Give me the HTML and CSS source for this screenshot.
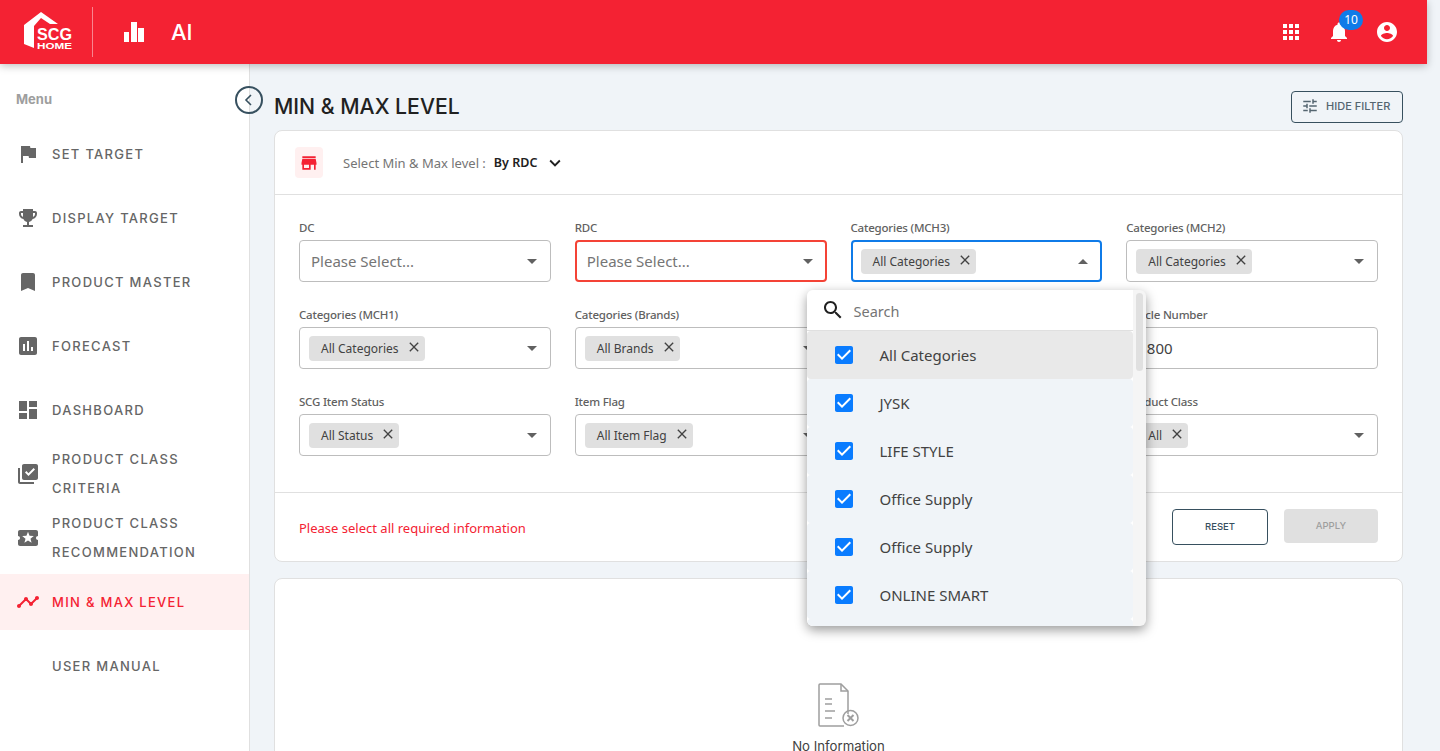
FILE: index.html
```html
<!DOCTYPE html>
<html>
<head>
	<meta charset="utf-8">
	<meta name="viewport" content="width=device-width, initial-scale=1">
	<title>Min &amp; Max Level</title>
	<link rel="stylesheet" href="styles.css">
</head>
<body>
	<svg class="defs" width="0" height="0">
		<symbol id="caret" viewBox="0 0 24 24"><path d="M7 10l5 5 5-5z"/></symbol>
		<symbol id="caret-up" viewBox="0 0 24 24"><path d="M7 15l5-5 5 5z"/></symbol>
		<symbol id="close" viewBox="0 0 24 24"><path d="M19 6.41L17.59 5 12 10.59 6.41 5 5 6.41 10.59 12 5 17.59 6.41 19 12 13.41 17.59 19 19 17.59 13.41 12z"/></symbol>
		<symbol id="checked" viewBox="0 0 24 24"><rect x="5" y="5" width="14" height="14" fill="#fff"/><path d="M19 3H5c-1.11 0-2 .9-2 2v14c0 1.1.89 2 2 2h14c1.11 0 2-.9 2-2V5c0-1.1-.89-2-2-2zm-9 14l-5-5 1.41-1.41L10 14.17l7.59-7.59L19 8l-9 9z"/></symbol>
	</svg>

	<div class="app">
		<header class="topbar">
			<svg class="logo" viewBox="20 7 60 50" width="60" height="50">
				<path d="M24 25L41 12l17 12h-8l-9-6-7 8v22l-10-4z" fill="#fff"/>
				<text class="logo-scg" x="37" y="39.5" textLength="35" lengthAdjust="spacingAndGlyphs">SCG</text>
				<text class="logo-home" x="37" y="48.5" textLength="35" lengthAdjust="spacingAndGlyphs">HOME</text>
			</svg>
			<span class="topbar-sep"></span>
			<svg class="topbar-chart" viewBox="0 0 20 20" width="20" height="20"><path d="M0 10h5v10H0zM7 0h6v20H7zM14 6h6v14h-6z" fill="#fff"/></svg>
			<span class="topbar-title">AI</span>
			<div class="topbar-icons">
				<svg class="ticon" viewBox="0 0 24 24"><path d="M4 8h4V4H4v4zm6 12h4v-4h-4v4zm-6 0h4v-4H4v4zm0-6h4v-4H4v4zm6 0h4v-4h-4v4zm6-10v4h4V4h-4zm-6 4h4V4h-4v4zm6 6h4v-4h-4v4zm0 6h4v-4h-4v4z"/></svg>
				<div class="bell">
					<svg class="ticon" viewBox="0 0 24 24"><path d="M12 22c1.1 0 2-.9 2-2h-4c0 1.1.89 2 2 2zm6-6v-5c0-3.07-1.64-5.64-4.5-6.32V4c0-.83-.67-1.5-1.5-1.5s-1.5.67-1.5 1.5v.68C7.63 5.36 6 7.92 6 11v5l-2 2v1h16v-1l-2-2z"/></svg>
					<span class="badge">10</span>
				</div>
				<svg class="ticon" viewBox="0 0 24 24"><path d="M12 2C6.48 2 2 6.48 2 12s4.48 10 10 10 10-4.48 10-10S17.52 2 12 2zm0 3c1.66 0 3 1.34 3 3s-1.34 3-3 3-3-1.34-3-3 1.34-3 3-3zm0 14.2c-2.5 0-4.71-1.28-6-3.22.03-1.99 4-3.08 6-3.08 1.99 0 5.97 1.09 6 3.08-1.29 1.94-3.5 3.22-6 3.22z"/></svg>
			</div>
		</header>

		<div class="layout">
			<aside class="sidebar">
				<div class="menu-title">Menu</div>
				<nav class="menu">
					<a class="menu-item"><svg viewBox="0 0 24 24"><path d="M14.4 6L14 4H5v17h2v-7h5.6l.4 2h7V6z"/></svg><span>SET TARGET</span></a>
					<a class="menu-item"><svg viewBox="0 0 24 24"><path d="M19 5h-2V3H7v2H5c-1.1 0-2 .9-2 2v1c0 2.55 1.92 4.63 4.39 4.94.63 1.5 1.98 2.63 3.61 2.96V19H7v2h10v-2h-4v-3.1c1.63-.33 2.98-1.46 3.61-2.96C19.08 12.63 21 10.55 21 8V7c0-1.1-.9-2-2-2zM5 8V7h2v3.82C5.84 10.4 5 9.3 5 8zm14 0c0 1.3-.84 2.4-2 2.82V7h2v1z"/></svg><span>DISPLAY TARGET</span></a>
					<a class="menu-item"><svg viewBox="0 0 24 24"><path d="M17 3H7c-1.1 0-1.99.9-1.99 2L5 21l7-3 7 3V5c0-1.1-.9-2-2-2z"/></svg><span>PRODUCT MASTER</span></a>
					<a class="menu-item"><svg viewBox="0 0 24 24"><path d="M19 3H5c-1.1 0-2 .9-2 2v14c0 1.1.9 2 2 2h14c1.1 0 2-.9 2-2V5c0-1.1-.9-2-2-2zM9 17H7v-7h2v7zm4 0h-2V7h2v10zm4 0h-2v-4h2v4z"/></svg><span>FORECAST</span></a>
					<a class="menu-item"><svg viewBox="0 0 24 24"><path d="M3 13h8V3H3v10zm0 8h8v-6H3v6zm10 0h8V11h-8v10zm0-18v6h8V3h-8z"/></svg><span>DASHBOARD</span></a>
					<a class="menu-item"><svg viewBox="0 0 24 24"><path d="M20 2H8c-1.1 0-2 .9-2 2v12c0 1.1.9 2 2 2h12c1.1 0 2-.9 2-2V4c0-1.1-.9-2-2-2zm-7.53 12L9 10.5l1.4-1.41 2.07 2.07L17.6 6 19 7.41 12.47 14zM4 6H2v14c0 1.1.9 2 2 2h14v-2H4V6z"/></svg><span>PRODUCT CLASS CRITERIA</span></a>
					<a class="menu-item"><svg viewBox="0 0 24 24"><path d="M20 12c0-1.1.9-2 2-2V6c0-1.1-.9-2-2-2H4c-1.1 0-1.99.9-1.99 2v4c1.1 0 1.99.9 1.99 2s-.89 2-2 2v4c0 1.1.9 2 2 2h16c1.1 0 2-.9 2-2v-4c-1.1 0-2-.9-2-2zm-4.42 4.8L12 14.5l-3.58 2.3 1.08-4.12-3.29-2.69 4.24-.25L12 5.8l1.54 3.95 4.24.25-3.29 2.69 1.09 4.11z"/></svg><span>PRODUCT CLASS RECOMMENDATION</span></a>
					<a class="menu-item active"><svg viewBox="0 0 24 24"><path d="M23 8c0 1.1-.9 2-2 2-.18 0-.35-.02-.51-.07l-3.56 3.55c.05.16.07.34.07.52 0 1.1-.9 2-2 2s-2-.9-2-2c0-.18.02-.36.07-.52l-2.55-2.55c-.16.05-.34.07-.52.07s-.36-.02-.52-.07l-4.55 4.56c.05.16.07.33.07.51 0 1.1-.9 2-2 2s-2-.9-2-2 .9-2 2-2c.18 0 .35.02.51.07l4.56-4.55C8.02 9.36 8 9.18 8 9c0-1.1.9-2 2-2s2 .9 2 2c0 .18-.02.36-.07.52l2.55 2.55c.16-.05.34-.07.52-.07s.36.02.52.07l3.55-3.56C19.02 8.35 19 8.18 19 8c0-1.1.9-2 2-2s2 .9 2 2z"/></svg><span>MIN &amp; MAX LEVEL</span></a>
					<a class="menu-item"><svg viewBox="0 0 24 24"></svg><span>USER MANUAL</span></a>
				</nav>
				<button class="collapse" type="button">
					<svg viewBox="0 0 24 24" width="24" height="24"><path d="M14 7l-5 5 5 5" fill="none" stroke="#37505f" stroke-width="1.6"/></svg>
				</button>
			</aside>

			<main class="main">
				<div class="page-head">
					<h1>MIN &amp; MAX LEVEL</h1>
					<button class="btn-filter" type="button">
						<svg viewBox="0 0 24 24" width="18" height="18"><path d="M3 17v2h6v-2H3zM3 5v2h10V5H3zm10 16v-2h8v-2h-8v-2h-2v6h2zM7 9v2H3v2h4v2h2V9H7zm14 4v-2H11v2h10zm-6-4h2V7h4V5h-4V3h-2v6z"/></svg>
						HIDE FILTER
					</button>
				</div>

				<section class="card">
					<div class="card-head">
						<span class="store-icon">
							<svg viewBox="0 0 24 24" width="20" height="20"><path d="M20 4H4v2h16V4zm1 10v-2l-1-5H4l-1 5v2h1v6h10v-6h4v6h2v-6h1zm-9 4H6v-4h6v4z"/></svg>
						</span>
						<span class="level-label">Select Min &amp; Max level :</span>
						<span class="level-value">By RDC</span>
						<svg class="level-chevron" viewBox="0 0 24 24" width="22" height="22"><path d="M16.59 8.59L12 13.17 7.41 8.59 6 10l6 6 6-6z"/></svg>
					</div>

					<div class="filters">
						<div class="field">
							<label>DC</label>
							<div class="control"><span class="placeholder">Please Select...</span><svg class="caret"><use href="#caret"/></svg></div>
						</div>
						<div class="field">
							<label>RDC</label>
							<div class="control error"><span class="placeholder">Please Select...</span><svg class="caret"><use href="#caret"/></svg></div>
						</div>
						<div class="field">
							<label>Categories (MCH3)</label>
							<div class="control focus">
								<span class="chip">All Categories<svg><use href="#close"/></svg></span>
								<svg class="caret"><use href="#caret-up"/></svg>
								<div class="dropdown">
									<div class="dropdown-main">
										<div class="search">
											<svg viewBox="0 0 24 24" width="24" height="24"><path d="M15.5 14h-.79l-.28-.27C15.41 12.59 16 11.11 16 9.5 16 5.91 13.09 3 9.5 3S3 5.91 3 9.5 5.91 16 9.5 16c1.61 0 3.09-.59 4.23-1.57l.27.28v.79l5 4.99L20.49 19l-4.99-5zm-6 0C7.01 14 5 11.99 5 9.5S7.01 5 9.5 5 14 7.01 14 9.5 11.99 14 9.5 14z"/></svg>
											<span>Search</span>
										</div>
										<div class="option current"><svg><use href="#checked"/></svg>All Categories</div>
										<div class="option"><svg><use href="#checked"/></svg>JYSK</div>
										<div class="option"><svg><use href="#checked"/></svg>LIFE STYLE</div>
										<div class="option"><svg><use href="#checked"/></svg>Office Supply</div>
										<div class="option"><svg><use href="#checked"/></svg>Office Supply</div>
										<div class="option"><svg><use href="#checked"/></svg>ONLINE SMART</div>
										<div class="option"></div>
									</div>
									<div class="scroll-track"><div class="scroll-thumb"></div></div>
								</div>
							</div>
						</div>
						<div class="field">
							<label>Categories (MCH2)</label>
							<div class="control"><span class="chip">All Categories<svg><use href="#close"/></svg></span><svg class="caret"><use href="#caret"/></svg></div>
						</div>

						<div class="field">
							<label>Categories (MCH1)</label>
							<div class="control"><span class="chip">All Categories<svg><use href="#close"/></svg></span><svg class="caret"><use href="#caret"/></svg></div>
						</div>
						<div class="field">
							<label>Categories (Brands)</label>
							<div class="control"><span class="chip">All Brands<svg><use href="#close"/></svg></span><svg class="caret"><use href="#caret"/></svg></div>
						</div>
						<div class="field">
							<label></label>
							<div class="control"></div>
						</div>
						<div class="field">
							<label>Article Number</label>
							<div class="control"><span class="value">1800</span></div>
						</div>

						<div class="field">
							<label>SCG Item Status</label>
							<div class="control"><span class="chip">All Status<svg><use href="#close"/></svg></span><svg class="caret"><use href="#caret"/></svg></div>
						</div>
						<div class="field">
							<label>Item Flag</label>
							<div class="control"><span class="chip">All Item Flag<svg><use href="#close"/></svg></span><svg class="caret"><use href="#caret"/></svg></div>
						</div>
						<div class="field">
							<label></label>
							<div class="control"></div>
						</div>
						<div class="field">
							<label>Product Class</label>
							<div class="control"><span class="chip">All<svg><use href="#close"/></svg></span><svg class="caret"><use href="#caret"/></svg></div>
						</div>
					</div>

					<div class="card-foot">
						<span class="form-error">Please select all required information</span>
						<div class="actions">
							<button class="btn-reset" type="button">RESET</button>
							<button class="btn-apply" type="button">APPLY</button>
						</div>
					</div>
				</section>

				<section class="card empty">
					<svg viewBox="0 0 42 46" width="42" height="46" fill="none" stroke="#9e9e9e" stroke-width="1.5">
						<path d="M30 31V8l-7-7H2a1 1 0 0 0-1 1v40a1 1 0 0 0 1 1h24"/>
						<path d="M23 1v7h7"/>
						<path d="M7 16h7M7 21h7M7 28h10M7 35h7"/>
						<circle cx="32.5" cy="35" r="7.5"/>
						<path d="M29.5 32l6 6M35.5 32l-6 6" stroke-width="2"/>
					</svg>
					<p>No Information</p>
				</section>
			</main>
		</div>
	</div>
</body>
</html>
```

FILE: styles.css
```css
* {
	box-sizing: border-box;
}

html, body {
	margin: 0;
	height: 100%;
	overflow: hidden;
}

body {
	background: #f0f4f8;
	font-family: "Noto Sans", sans-serif;
	color: #212121;
}

.defs {
	display: block;
	height: 0;
}

.app {
	width: 1427px;
}

/* top bar */
.topbar {
	position: relative;
	z-index: 5;
	display: flex;
	align-items: center;
	height: 64px;
	background: #f42233;
	box-shadow: 0 2px 8px rgba(0, 0, 0, 0.25);
	color: #fff;
}

.logo {
	margin-left: 20px;
	flex: none;
}

.logo-scg {
	font: bold 17px "Liberation Sans", sans-serif;
	fill: #fff;
}

.logo-home {
	font: bold 9.5px "Liberation Sans", sans-serif;
	fill: #fff;
}

.topbar-sep {
	width: 1px;
	height: 50px;
	margin-left: 12px;
	background: rgba(255, 255, 255, 0.45);
}

.topbar-chart {
	margin-left: 31px;
}

.topbar-title {
	margin-left: 27px;
	font: 500 22px Inter, sans-serif;
}

.topbar-icons {
	display: flex;
	align-items: center;
	gap: 24px;
	margin-left: auto;
	margin-right: 28px;
}

.ticon {
	display: block;
	width: 24px;
	height: 24px;
	fill: #fff;
}

.bell {
	position: relative;
}

.badge {
	position: absolute;
	top: -10px;
	left: 12px;
	width: 24px;
	height: 20px;
	border-radius: 10px;
	background: #0f7be8;
	color: #fff;
	font: 12px/20px "Noto Sans", sans-serif;
	text-align: center;
}

/* sidebar */
.layout {
	display: flex;
	height: 687px;
}

.sidebar {
	position: relative;
	flex: none;
	width: 250px;
	background: #fff;
	border-right: 1px solid #e0e0e0;
}

.menu-title {
	padding: 27px 16px 0;
	font: 700 13px/17px Inter, sans-serif;
	color: #9e9e9e;
}

.menu {
	display: flex;
	flex-direction: column;
	gap: 8px;
	margin-top: 18px;
}

.menu-item {
	display: flex;
	align-items: center;
	gap: 12px;
	height: 56px;
	padding-left: 16px;
	font: 500 13px/29px Inter, sans-serif;
	letter-spacing: 1.3px;
	color: #666;
}

.menu-item span {
	max-width: 170px;
}

.menu-item svg {
	flex: none;
	width: 24px;
	height: 24px;
	fill: #666;
}

.menu-item.active {
	background: #fff0f0;
	color: #f42233;
}

.menu-item.active svg {
	fill: #f42233;
}

.collapse {
	position: absolute;
	top: 22px;
	right: -14px;
	display: flex;
	align-items: center;
	justify-content: center;
	width: 28px;
	height: 28px;
	padding: 0;
	border: 2px solid #37505f;
	border-radius: 50%;
	background: transparent;
}

/* main */
.main {
	flex: 1;
	padding: 27px 24px 0;
	min-width: 0;
}

.page-head {
	display: flex;
	align-items: center;
	justify-content: space-between;
	height: 32px;
	margin-bottom: 7px;
}

.page-head h1 {
	margin: -2px 0 0;
	font: 500 21.2px Inter, sans-serif;
	color: #212121;
}

.btn-filter {
	display: flex;
	align-items: center;
	gap: 7px;
	width: 112px;
	height: 32px;
	padding: 0 0 2px 9px;
	border: 1px solid #37505f;
	border-radius: 4px;
	background: transparent;
	font: 500 11px Inter, sans-serif;
	color: #546570;
}

.btn-filter svg {
	fill: #546570;
}

.card {
	background: #fff;
	border: 1px solid #e0e0e0;
	border-radius: 8px;
}

.card-head {
	display: flex;
	align-items: center;
	height: 64px;
	padding-left: 20px;
	border-bottom: 1px solid #e0e0e0;
}

.store-icon {
	display: flex;
	align-items: center;
	justify-content: center;
	width: 28px;
	height: 31px;
	border-radius: 4px;
	background: #fff0f0;
	fill: #f42233;
}

.level-label {
	margin-left: 20px;
	font-size: 13px;
	color: #757575;
}

.level-value {
	margin-left: 8px;
	font-size: 12.5px;
	font-weight: 600;
	color: #212121;
}

.level-chevron {
	margin-left: 7px;
	fill: #212121;
}

.filters {
	display: grid;
	grid-template-columns: repeat(4, 1fr);
	column-gap: 24px;
	row-gap: 26px;
	padding: 26px 24px 36px;
}

.field label {
	display: block;
	height: 19px;
	font-size: 11.5px;
	font-weight: 500;
	letter-spacing: -0.2px;
	line-height: 14px;
	color: #616161;
	white-space: nowrap;
}

.control {
	position: relative;
	display: flex;
	align-items: center;
	height: 42px;
	padding: 0 6px 0 11px;
	border: 1px solid #bdbdbd;
	border-radius: 4px;
	background: #fff;
}

.control.error {
	border: 2px solid #f44336;
	padding: 0 5px 0 10px;
}

.control.focus {
	border: 2px solid #0f7be8;
	padding: 0 5px 0 8px;
}

.placeholder {
	font-size: 15px;
	color: #757575;
}

.value {
	font-size: 15px;
	color: #424242;
}

.caret {
	width: 24px;
	height: 24px;
	margin-left: auto;
	fill: #616161;
}

.chip {
	display: flex;
	align-items: center;
	height: 25px;
	margin-left: -2px;
	padding: 0 3px 0 12px;
	border-radius: 4px;
	background: #e0e0e0;
	font-size: 12px;
	color: #424242;
}

.control.focus .chip {
	margin-left: 0;
}

.chip svg {
	width: 16px;
	height: 16px;
	margin-left: 7px;
	margin-top: -2px;
	fill: #424242;
}

/* dropdown opens over the rows below */
.dropdown {
	position: absolute;
	top: 48px;
	left: -46px;
	z-index: 3;
	display: flex;
	width: 339px;
	height: 336px;
	border-radius: 6px;
	background: #f5f5f5;
	box-shadow: 0 4px 12px rgba(0, 0, 0, 0.4);
	overflow: hidden;
}

.dropdown-main {
	width: 326px;
	background: #fff;
}

.search {
	display: flex;
	align-items: center;
	gap: 9px;
	height: 41px;
	padding: 1px 0 0 14px;
	border-bottom: 1px solid #e0e0e0;
	font-size: 14.5px;
	color: #757575;
}

.search svg {
	fill: #212121;
	margin-top: -1px;
}

.option {
	display: flex;
	align-items: center;
	height: 48px;
	padding-left: 25px;
	border-radius: 4px;
	background: #f0f4f8;
	font-size: 15px;
	color: #424242;
}

.option.current {
	background: #e9e9e9;
}

.option svg {
	width: 24px;
	height: 24px;
	margin-right: 24px;
	fill: #0a7cff;
}

.scroll-track {
	width: 13px;
	padding: 3px 3px 0;
}

.scroll-thumb {
	width: 7px;
	height: 78px;
	border-radius: 4px;
	background: #e0e0e0;
}

.card-foot {
	display: flex;
	align-items: center;
	justify-content: space-between;
	height: 69px;
	padding: 0 24px;
	border-top: 1px solid #e0e0e0;
}

.form-error {
	margin-top: 2px;
	font-size: 13px;
	color: #f42233;
}

.actions {
	display: flex;
	gap: 16px;
}

.btn-reset, .btn-apply {
	height: 36px;
	padding-bottom: 2px;
	border-radius: 4px;
	font: 500 9.5px Inter, sans-serif;
}

.btn-reset {
	width: 96px;
	border: 1px solid #37505f;
	background: #fff;
	color: #37505f;
}

.btn-apply {
	width: 94px;
	height: 34px;
	border: 0;
	background: #e0e0e0;
	color: #9e9e9e;
}

.empty {
	display: flex;
	flex-direction: column;
	align-items: center;
	height: 400px;
	margin-top: 16px;
	padding-top: 104px;
}

.empty p {
	margin: 9px 0 0;
	font: 13.2px Inter, sans-serif;
	color: #424242;
}
```
